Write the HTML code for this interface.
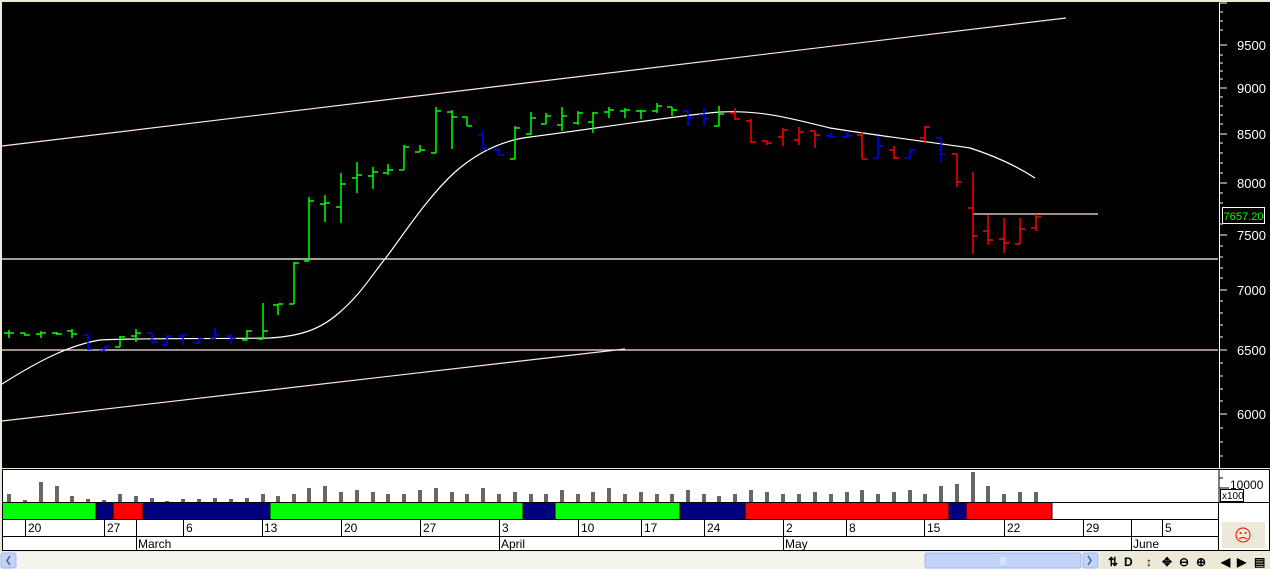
<!DOCTYPE html>
<html><head><meta charset="utf-8">
<style>
html,body{margin:0;padding:0;width:1270px;height:569px;overflow:hidden;background:#ece9d8;font-family:"Liberation Sans",sans-serif;}
svg{position:absolute;left:0;top:0}
</style></head><body>
<svg width="1270" height="569" xmlns="http://www.w3.org/2000/svg" font-family="Liberation Sans, sans-serif">
<rect x="0" y="0" width="1270" height="569" fill="#ece9d8"/>
<rect x="2" y="2" width="1268" height="466" fill="#000"/>
<g stroke="#fff" stroke-width="1">
<line x1="1219.5" y1="3" x2="1219.5" y2="468"/>
<path d="M1219 3h8M1219 12h4M1219 21h4M1219 30h4M1219 45h8M1219 55h4M1219 63h4M1219 71h4M1219 79h4M1219 88h8M1219 97h4M1219 106h4M1219 115h4M1219 124h4M1219 134h8M1219 143h4M1219 153h4M1219 163h4M1219 173h4M1219 183h8M1219 193h4M1219 203h4M1219 224h4M1219 235h8M1219 246h4M1219 257h4M1219 268h4M1219 278h4M1219 290h8M1219 301h4M1219 313h4M1219 325h4M1219 337h4M1219 350h8M1219 363h4M1219 376h4M1219 389h4M1219 401h4M1219 414h8M1219 428h4M1219 442h4M1219 456h4"/>
</g>
<g fill="#fff" font-size="13">
<text x="1237" y="50">9500</text><text x="1237" y="93">9000</text><text x="1237" y="139">8500</text>
<text x="1237" y="188">8000</text><text x="1237" y="240">7500</text><text x="1237" y="295">7000</text>
<text x="1237" y="355">6500</text><text x="1237" y="419">6000</text>
</g>
<rect x="1222.5" y="207.5" width="42" height="16" fill="#000" stroke="#fff"/>
<text x="1223.5" y="220" fill="#00ff00" font-size="11" textLength="40">7657.20</text>
<g stroke-width="1.2" fill="none">
<line x1="2" y1="146" x2="1066" y2="18" stroke="#ffe6e6"/>
<line x1="2" y1="421" x2="625" y2="349" stroke="#ffe6e6"/>
<line x1="2" y1="350" x2="1218" y2="350" stroke="#ffe6e6"/>
<line x1="2" y1="259" x2="1218" y2="259" stroke="#fff"/>
<line x1="973" y1="214" x2="1098" y2="214" stroke="#ffe6e6"/>
<path stroke="#fff" d="M2 384 C40 360 70 345 100 340 C130 338 200 339 270 338 C300 336 320 330 340 312 C360 295 372 275 388 255 C410 225 430 195 455 172 C480 150 505 140 530 137 C600 128 680 115 720 112 C760 110 790 118 830 128 C880 136 930 142 970 148 C995 156 1015 165 1035 178"/>
</g>
<g stroke-width="1.5" fill="none">
<path stroke="#00ff00" d="M9 330V338M4 333H9M9 333H14 M25 333V336M20 333H25M25 335H30 M41 331V338M36 334H41M41 333H46 M57 332V335M52 333H57M57 334H62 M72 329V338M67 331H72M72 334H77"/>
<path stroke="#0000ff" d="M88 335V350M83 335H88M88 349H93 M104 347V352M99 351H104M104 347H109"/>
<path stroke="#00ff00" d="M120 336V347M115 347H120M120 337H125 M136 329V342M131 336H136M136 333H141"/>
<path stroke="#0000ff" d="M152 333V344M147 333H152M152 342H157 M167 335V345M162 345H167M167 336H172 M183 334V345M178 336H183M183 335H188 M199 338V344M194 343H199M199 339H204 M215 328V339M210 338H215M215 335H220 M231 334V344M226 336H231M231 338H236"/>
<path stroke="#00ff00" d="M247 330V340M242 340H247M247 331H252 M263 303V339M258 339H263M263 331H268 M278 304V315M273 305H278M278 304H283 M294 262V304M289 304H294M294 263H299 M309 197V261M304 261H309M309 201H314 M325 195V222M320 204H325M325 203H330 M341 173V223M336 207H341M341 184H346 M357 162V193M352 178H357M357 175H362 M373 167V189M368 176H373M373 172H378 M388 164V175M383 173H388M388 170H393 M404 145V170M399 170H404M404 147H409 M420 145V152M415 152H420M420 150H425 M436 107V153M431 153H436M436 111H441 M452 110V149M447 112H452M452 117H457 M467 117V126M462 117H467M467 126H472"/>
<path stroke="#0000ff" d="M483 131V150M478 135H483M483 149H488 M499 148V155M494 150H499M499 155H504"/>
<path stroke="#00ff00" d="M515 126V159M510 159H515M515 128H520 M531 112V135M526 134H531M531 118H536 M546 113V124M541 124H546M546 116H551 M562 107V131M557 125H562M562 116H567 M578 111V125M573 123H578M578 113H583 M593 112V133M588 122H593M593 113H598 M609 107V118M604 112H609M609 110H614 M625 108V118M620 111H625M625 110H630 M641 110V119M636 111H641M641 111H646 M657 103V113M652 111H657M657 106H662 M672 107V116M667 107H672M672 110H677"/>
<path stroke="#0000ff" d="M688 110V126M683 111H688M688 118H693 M704 108V125M699 115H704M704 119H709"/>
<path stroke="#00ff00" d="M719 106V126M714 126H719M719 114H724"/>
<path stroke="#ff0000" d="M735 108V120M730 113H735M735 119H740 M751 119V143M746 121H751M751 142H756 M767 141V145M762 141H767M767 143H772 M783 128V146M778 137H783M783 130H788 M799 127V145M794 140H799M799 132H804 M815 131V148M810 131H815M815 135H820"/>
<path stroke="#0000ff" d="M831 133V138M826 136H831M831 137H836 M847 131V137M842 137H847M847 136H852"/>
<path stroke="#ff0000" d="M862 132V159M857 135H862M862 159H867"/>
<path stroke="#0000ff" d="M878 136V158M873 158H878M878 146H883"/>
<path stroke="#ff0000" d="M894 146V159M889 150H894M894 158H899"/>
<path stroke="#0000ff" d="M910 150V158M905 158H910M910 150H915"/>
<path stroke="#ff0000" d="M925 126V143M920 138H925M925 127H930"/>
<path stroke="#0000ff" d="M941 138V162M936 138H941M941 154H946"/>
<path stroke="#ff0000" d="M957 154V187M952 154H957M957 182H962 M973 172V254M968 208H973M973 236H978 M988 215V245M983 231H988M988 240H993 M1004 218V253M999 239H1004M1004 243H1009 M1020 218V244M1015 244H1020M1020 229H1025 M1036 214V231M1031 228H1036M1036 217H1041"/>
</g>
<rect x="2.5" y="469.5" width="1267" height="81" fill="#fff" stroke="#000"/>
<line x1="2" y1="502.5" x2="1270" y2="502.5" stroke="#000"/>
<line x1="2" y1="519.5" x2="1218" y2="519.5" stroke="#000"/>
<line x1="2" y1="536.5" x2="1218" y2="536.5" stroke="#000"/>
<line x1="1218.5" y1="502" x2="1218.5" y2="551" stroke="#000"/>
<g fill="#666">
<rect x="7" y="494" width="4" height="8"/><rect x="23" y="500" width="4" height="2"/><rect x="39" y="482" width="4" height="20"/><rect x="55" y="486" width="4" height="16"/><rect x="70" y="496" width="4" height="6"/><rect x="86" y="499" width="4" height="3"/><rect x="102" y="500" width="4" height="2"/><rect x="118" y="494" width="4" height="8"/><rect x="134" y="496" width="4" height="6"/><rect x="150" y="498" width="4" height="4"/><rect x="165" y="501" width="4" height="1"/><rect x="181" y="499" width="4" height="3"/><rect x="197" y="499" width="4" height="3"/><rect x="213" y="498" width="4" height="4"/><rect x="229" y="499" width="4" height="3"/><rect x="245" y="498" width="4" height="4"/><rect x="261" y="494" width="4" height="8"/><rect x="276" y="496" width="4" height="6"/><rect x="292" y="494" width="4" height="8"/><rect x="307" y="488" width="4" height="14"/><rect x="323" y="486" width="4" height="16"/><rect x="339" y="492" width="4" height="10"/><rect x="355" y="490" width="4" height="12"/><rect x="371" y="492" width="4" height="10"/><rect x="386" y="494" width="4" height="8"/><rect x="402" y="494" width="4" height="8"/><rect x="418" y="490" width="4" height="12"/><rect x="434" y="488" width="4" height="14"/><rect x="450" y="492" width="4" height="10"/><rect x="465" y="494" width="4" height="8"/><rect x="481" y="488" width="4" height="14"/><rect x="497" y="494" width="4" height="8"/><rect x="513" y="492" width="4" height="10"/><rect x="529" y="494" width="4" height="8"/><rect x="544" y="494" width="4" height="8"/><rect x="560" y="490" width="4" height="12"/><rect x="576" y="494" width="4" height="8"/><rect x="591" y="492" width="4" height="10"/><rect x="607" y="488" width="4" height="14"/><rect x="623" y="494" width="4" height="8"/><rect x="639" y="492" width="4" height="10"/><rect x="655" y="494" width="4" height="8"/><rect x="670" y="494" width="4" height="8"/><rect x="686" y="490" width="4" height="12"/><rect x="702" y="494" width="4" height="8"/><rect x="717" y="496" width="4" height="6"/><rect x="733" y="494" width="4" height="8"/><rect x="749" y="490" width="4" height="12"/><rect x="765" y="492" width="4" height="10"/><rect x="781" y="494" width="4" height="8"/><rect x="797" y="494" width="4" height="8"/><rect x="813" y="492" width="4" height="10"/><rect x="829" y="494" width="4" height="8"/><rect x="845" y="492" width="4" height="10"/><rect x="860" y="490" width="4" height="12"/><rect x="876" y="494" width="4" height="8"/><rect x="892" y="492" width="4" height="10"/><rect x="908" y="490" width="4" height="12"/><rect x="923" y="494" width="4" height="8"/><rect x="939" y="486" width="4" height="16"/><rect x="955" y="484" width="4" height="18"/><rect x="971" y="472" width="4" height="30"/><rect x="986" y="486" width="4" height="16"/><rect x="1002" y="494" width="4" height="8"/><rect x="1018" y="492" width="4" height="10"/><rect x="1034" y="492" width="4" height="10"/>
</g>
<path d="M1219 470V502M1219 478h4M1219 488h10" stroke="#000"/>
<text x="1230" y="489" font-size="12" fill="#000">10000</text>
<rect x="1220.5" y="489.5" width="23" height="12" fill="#fff" stroke="#000"/>
<text x="1222" y="499" font-size="10" fill="#000">x100</text>
<g>
<rect x="3" y="503" width="93" height="16" fill="#00ff00"/><rect x="96" y="503" width="17" height="16" fill="#000080"/><rect x="113" y="503" width="30" height="16" fill="#ff0000"/><rect x="143" y="503" width="127" height="16" fill="#000080"/><rect x="270" y="503" width="253" height="16" fill="#00ff00"/><rect x="523" y="503" width="32" height="16" fill="#000080"/><rect x="555" y="503" width="125" height="16" fill="#00ff00"/><rect x="680" y="503" width="65" height="16" fill="#000080"/><rect x="745" y="503" width="204" height="16" fill="#ff0000"/><rect x="949" y="503" width="17" height="16" fill="#000080"/><rect x="966" y="503" width="86" height="16" fill="#ff0000"/>
<path d="M96 503v16M113 503v16M143 503v16M270 503v16M523 503v16M555 503v16M680 503v16M745 503v16M949 503v16M966 503v16M1052 503v16" stroke="#000"/>
</g>
<g stroke="#000"><path d="M25.5 519v17M104.5 519v17M136.5 519v32M183.5 519v17M262.5 519v17M341.5 519v17M420.5 519v17M499.5 519v32M578.5 519v17M641.5 519v17M704.5 519v17M783.5 519v32M846.5 519v17M924.5 519v17M1004.5 519v17M1083.5 519v17M1131.5 519v32M1162.5 519v17"/></g>
<g font-size="12" fill="#000">
<text x="28" y="532">20</text><text x="107" y="532">27</text><text x="186" y="532">6</text><text x="264" y="532">13</text><text x="344" y="532">20</text><text x="423" y="532">27</text><text x="502" y="532">3</text><text x="581" y="532">10</text><text x="644" y="532">17</text><text x="707" y="532">24</text><text x="786" y="532">2</text><text x="849" y="532">8</text><text x="927" y="532">15</text><text x="1007" y="532">22</text><text x="1086" y="532">29</text><text x="1165" y="532">5</text>
<text x="138" y="548">March</text><text x="501" y="548">April</text><text x="785" y="548">May</text><text x="1133" y="548">June</text>
</g>
<rect x="1221.5" y="521.5" width="44" height="27" fill="#ece9d8" stroke="#fff"/>
<circle cx="1243" cy="535" r="7" fill="none" stroke="#ff0000"/>
<circle cx="1240.5" cy="533" r="1" fill="#ff0000"/><circle cx="1245.5" cy="533" r="1" fill="#ff0000"/>
<path d="M1239 539q4-3 8 0" stroke="#ff0000" fill="none"/>
<rect x="0" y="552" width="1100" height="17" fill="#f4f3ee"/>
<rect x="1" y="553" width="15" height="15" rx="2" fill="#c1d3fb" stroke="#a0b8e8"/>
<path d="M10 556l-3 4.5 3 4.5" stroke="#4d6185" stroke-width="1.5" fill="none"/>
<rect x="925" y="553" width="156" height="15" rx="2" fill="#c1d3fb" stroke="#a0b8e8"/>
<path d="M1001 557v8M1003 557v8M1005 557v8" stroke="#eef"/>
<rect x="1083" y="553" width="15" height="15" rx="2" fill="#c1d3fb" stroke="#a0b8e8"/>
<path d="M1088 556l3 4.5-3 4.5" stroke="#4d6185" stroke-width="1.5" fill="none"/>
<rect x="1100" y="552" width="170" height="17" fill="#ece9d8"/>
<g font-size="12" fill="#000" font-weight="bold">
<text x="1108" y="566">⇅</text><text x="1124" y="566">D</text><text x="1146" y="566">↕</text><text x="1162" y="566">✥</text><text x="1179" y="566">⊖</text><text x="1196" y="566">⊕</text><text x="1221" y="566">◀</text><text x="1237" y="566">▶</text><text x="1254" y="566">▤</text>
</g>
</svg>
</body></html>
